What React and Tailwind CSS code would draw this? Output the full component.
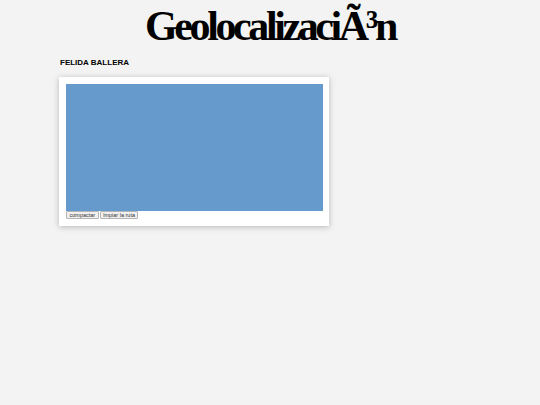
import React from 'react';

const App = () => {
  return (
    <div className="min-h-[405px] w-[540px] bg-[#f3f3f3]">
      <h1
        className="pt-[5px] text-center text-[42px] font-bold leading-[43px] tracking-[-3.4px] text-black"
        style={{ fontFamily: '"Liberation Serif", serif' }}
      >
        GeolocalizaciÃ³n
      </h1>
      <div className="pl-[59px] pt-[10px]" style={{ fontFamily: '"Liberation Sans", Arial, sans-serif' }}>
        <p className="pl-[1px] text-[8px] font-bold leading-[10px] text-black">FELIDA BALLERA</p>
        <div className="mt-[9px] w-[270px] bg-white px-[7px] pt-[7px] pb-[7px] shadow-[0_1px_6px_rgba(0,0,0,0.25)]">
          <div className="h-[127px] w-[257px] bg-[#6699cc]" />
          <div className="flex gap-[1px]">
            <button className="h-[8px] rounded-[1px] border border-[#b5b5b5] bg-[#f0f0f0] px-[2.5px] text-[5.5px] leading-[6px] text-[#333]">
              compactar
            </button>
            <button className="h-[8px] rounded-[1px] border border-[#b5b5b5] bg-[#f0f0f0] px-[2.5px] text-[5.5px] leading-[6px] text-[#333]">
              lmpiar la ruta
            </button>
          </div>
        </div>
      </div>
    </div>
  );
};

export default App;
